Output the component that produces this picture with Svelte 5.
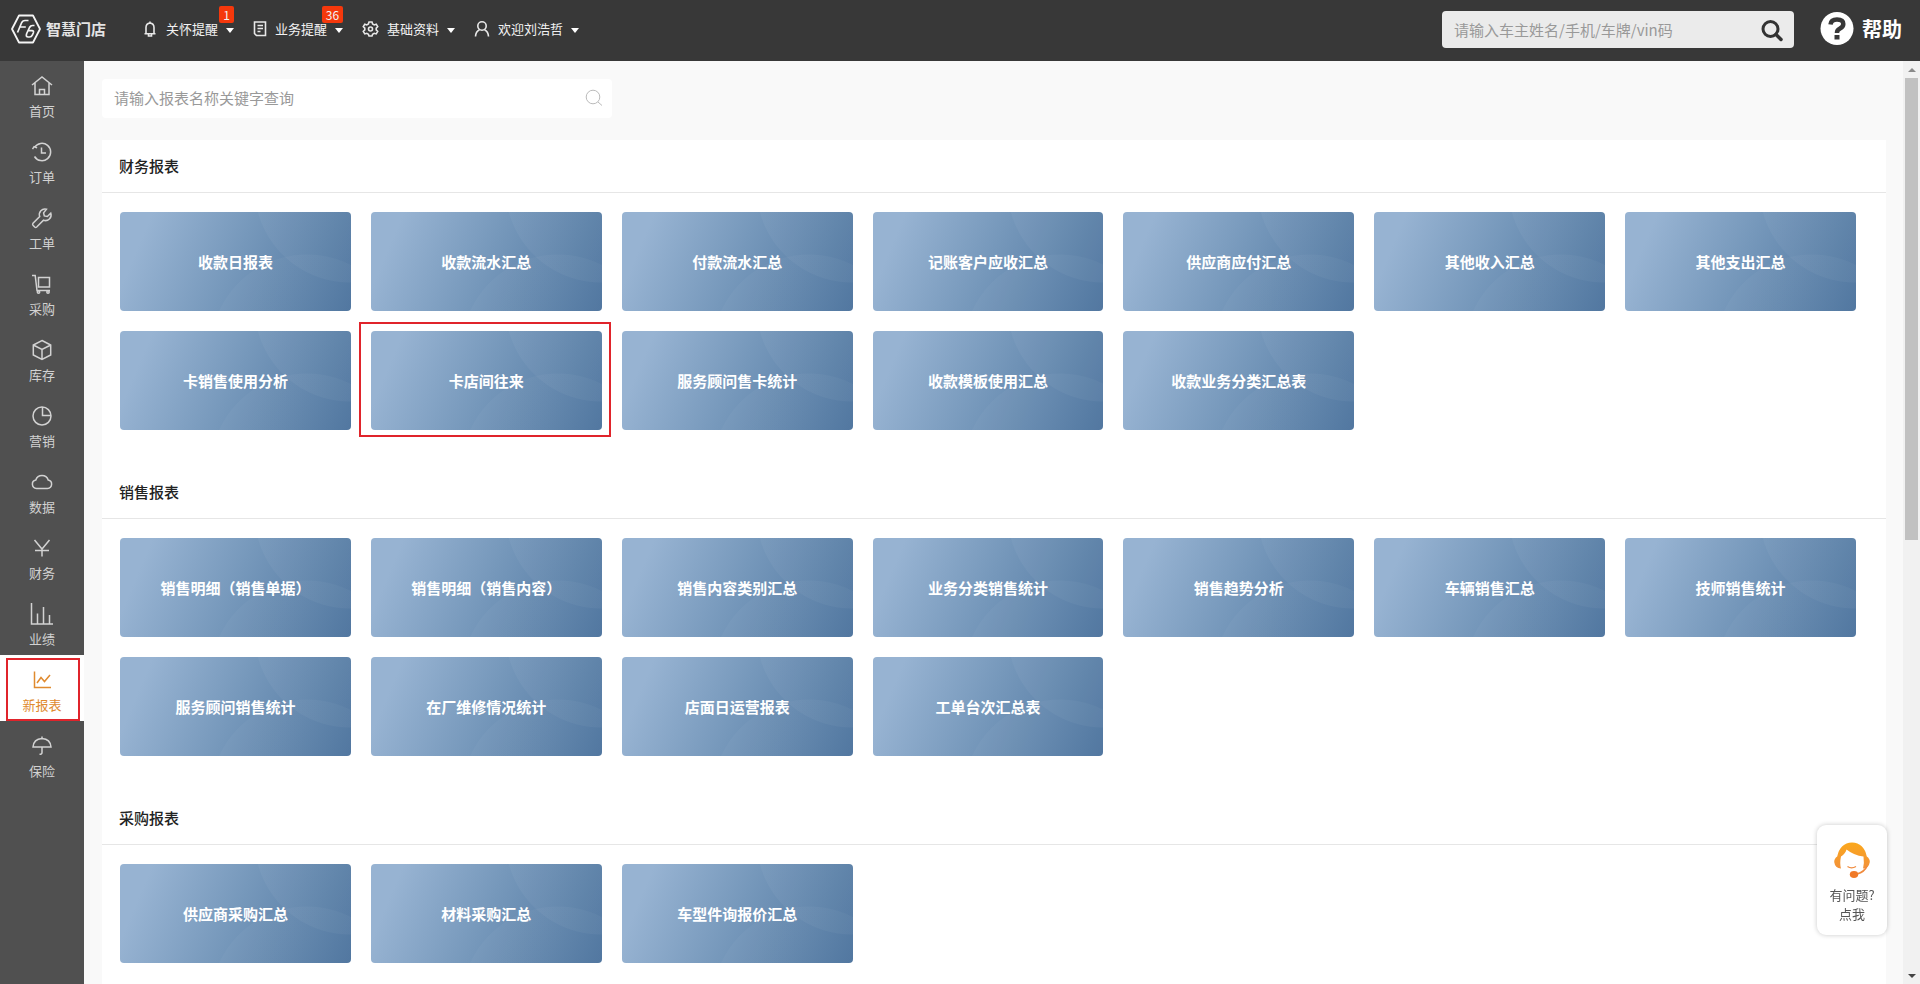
<script>
  const navItems = [
    { icon: 'bell', label: '关怀提醒', badge: '1' },
    { icon: 'doc', label: '业务提醒', badge: '36' },
    { icon: 'gear', label: '基础资料' },
    { icon: 'user', label: '欢迎刘浩哲' }
  ];

  const menu = [
    { icon: 'home', label: '首页' },
    { icon: 'history', label: '订单' },
    { icon: 'wrench', label: '工单' },
    { icon: 'cart', label: '采购' },
    { icon: 'box', label: '库存' },
    { icon: 'pie', label: '营销' },
    { icon: 'cloud', label: '数据' },
    { icon: 'yen', label: '财务' },
    { icon: 'bars', label: '业绩' },
    { icon: 'line', label: '新报表', active: true },
    { icon: 'umbrella', label: '保险' }
  ];

  const sections = [
    {
      title: '财务报表',
      cards: ['收款日报表', '收款流水汇总', '付款流水汇总', '记账客户应收汇总', '供应商应付汇总', '其他收入汇总', '其他支出汇总', '卡销售使用分析', '卡店间往来', '服务顾问售卡统计', '收款模板使用汇总', '收款业务分类汇总表']
    },
    {
      title: '销售报表',
      cards: ['销售明细（销售单据）', '销售明细（销售内容）', '销售内容类别汇总', '业务分类销售统计', '销售趋势分析', '车辆销售汇总', '技师销售统计', '服务顾问销售统计', '在厂维修情况统计', '店面日运营报表', '工单台次汇总表']
    },
    { title: '采购报表', cards: ['供应商采购汇总', '材料采购汇总', '车型件询报价汇总'] }
  ];
  const marked = '卡店间往来';
</script>

<div class="page">
  <header class="topbar">
    <a class="logo" href="#home">
      <svg width="32" height="30" viewBox="0 0 32 30" fill="none" stroke="#f4f4f4" aria-hidden="true">
        <path d="M9 1.500h14L30 15l-7 13.500H9L2 15z" stroke-width="1.800" stroke-linejoin="round" />
        <path d="M7.500 18.500l4-9.500q1-2.500 3.500-2.500h3.500M9.800 13h6" stroke-width="1.700" />
        <path d="M24.500 11.500h-2q-2 0-3 2l-2.800 6q-1.300 3.500 1.500 3.500h1.300q2 0 2.800-1.800l1-2.200q.8-2.300-1.300-2.300h-3.500" stroke-width="1.700" />
      </svg>
      <span>智慧门店</span>
    </a>

    <nav class="topnav">
      {#each navItems as item}
        <button class="nav-item">
          {#if item.icon === 'bell'}
            <svg width="16" height="18" viewBox="0 0 16 18"><path d="M4 13.500V7.500q0-4 4-4.500 4 .500 4 4.500v6M2.500 13.800h11M6.500 14v2h3v-2M8 3V1.500" /></svg>
          {:else if item.icon === 'doc'}
            <svg width="14" height="18" viewBox="0 0 14 18"><path d="M1.500 2h11v13.500h-9l-2-2zM4.500 5.500h5.500M4.500 8.500h5.500M4.500 11.500h3" /></svg>
          {:else if item.icon === 'gear'}
            <svg width="17" height="18" viewBox="0 0 17 18"><path d="M7 2h3l.6 2 1.600.9 2-.7 1.500 2.500-1.500 1.500v1.700l1.500 1.500-1.500 2.500-2-.6-1.600.9L10 16H7l-.6-1.800-1.600-.9-2 .6-1.500-2.500 1.500-1.500V8.200L1.300 6.700l1.500-2.500 2 .7 1.600-.9z" /><circle cx="8.500" cy="9" r="2" /></svg>
          {:else}
            <svg width="16" height="18" viewBox="0 0 16 18"><circle cx="8" cy="6" r="4.200" /><path d="M1.500 16.500q.3-5.200 4-6.800M14.500 16.500q-.3-5.200-4-6.800" /></svg>
          {/if}
          <span>{item.label}</span>
          <i class="caret"></i>
          {#if item.badge}<b class="badge">{item.badge}</b>{/if}
        </button>
      {/each}
    </nav>

    <form class="lookup">
      <input type="text" aria-label="车主查询" placeholder="请输入车主姓名/手机/车牌/vin码" />
      <button type="button" aria-label="查询">
        <svg width="24" height="24" viewBox="0 0 24 24" fill="none" stroke="#333"><circle cx="10.500" cy="11" r="7.500" stroke-width="3" /><path d="M16 16.500l5 5" stroke-width="3.500" stroke-linecap="round" /></svg>
      </button>
    </form>

    <a class="help" href="#help">
      <svg width="34" height="34" viewBox="0 0 34 34" aria-hidden="true">
        <circle cx="17" cy="16.500" r="16.500" fill="#fff" />
        <path d="M10.500 12.500q.5-5 6.500-5 6.300 0 6.300 4.500 0 2.800-3.300 4.500-3 1.500-3 4v.5" fill="none" stroke="#383838" stroke-width="4.500" />
        <rect x="14.500" y="23" width="5" height="4.500" fill="#383838" />
      </svg>
      <span>帮助</span>
    </a>
  </header>

  <div class="body">
    <nav class="sidebar">
      {#each menu as m}
        <a class="menu-item" class:active={m.active} href="#{m.icon}">
          <svg width="24" height="24" viewBox="0 0 24 24" aria-hidden="true">
            {#if m.icon === 'home'}
              <path d="M2 11l10-8 10 8M5 9v11.500h14V9M9.500 20.500v-5h5v5" />
            {:else if m.icon === 'history'}
              <path d="M4.500 7.500A8.700 8.700 0 1 1 4.500 16.500M11.500 7.500v5.500h4.500M2.500 9.200l1.600-2.500 3 1.200" />
            {:else if m.icon === 'wrench'}
              <path d="M16.500 3.200a5.600 5.600 0 0 0-6.800 7.300L3 17.300q-.8 1 0 2l1.700 1.700q1 .8 2 0l6.800-6.800a5.600 5.600 0 0 0 7.300-7l-3.500 3.300-3-.6-.7-3z" />
            {:else if m.icon === 'cart'}
              <path d="M2 3.500h3.200L7 18.500h13M8.500 5.500h11v9.500h-11z" /><circle cx="8.500" cy="20" r="1.200" /><circle cx="18" cy="20" r="1.200" />
            {:else if m.icon === 'box'}
              <path d="M12 2.500l8.700 4.500v10L12 21.500 3.300 17V7zM3.300 7l8.700 4.500L20.700 7M12 11.500v10" />
            {:else if m.icon === 'pie'}
              <circle cx="12" cy="12" r="9" /><path d="M12.500 3v8.500H21" />
            {:else if m.icon === 'cloud'}
              <path d="M6.500 18.500a4.300 4.300 0 0 1-.7-8.500 6.500 6.500 0 0 1 12.400 0 4.300 4.300 0 0 1-.7 8.500z" />
            {:else if m.icon === 'yen'}
              <path d="M4.500 4l7.500 9 7.500-9M12 13v7.500M5 14.500h14" />
            {:else if m.icon === 'bars'}
              <path d="M1.500 1v21H23M7.500 22V11.500M13.500 22V5M19.500 22v-9" />
            {:else if m.icon === 'line'}
              <path d="M4.500 3.500v16H21M7 15l4-5.500 3.500 4L20 7" />
            {:else}
              <path d="M3 13q.6-8 9-8.500 8.400.5 9 8.500zM12 2.500v2M12 13v5.500q0 2-2.500 1.800" />
            {/if}
          </svg>
          <span>{m.label}</span>
        </a>
      {/each}
    </nav>

    <main class="content">
      <form class="search">
        <input type="text" aria-label="报表名称" placeholder="请输入报表名称关键字查询" />
        <svg width="18" height="18" viewBox="0 0 18 18" fill="none" stroke="#bbb" aria-hidden="true"><circle cx="8" cy="8" r="6.800" /><path d="M13 13l4 3.500" /></svg>
      </form>

      <div class="panel">
        {#each sections as s}
          <section>
            <h2>{s.title}</h2>
            <div class="grid">
              {#each s.cards as c}
                <button class="card" class:marked={c === marked}>{c}</button>
              {/each}
            </div>
          </section>
        {/each}
      </div>
    </main>

    <div class="scrollbar" aria-hidden="true">
      <i class="arrow up"></i>
      <div class="track"><div class="thumb"></div></div>
      <i class="arrow down"></i>
    </div>
  </div>

  <button class="support">
    <svg width="38" height="38" viewBox="0 0 38 38" aria-hidden="true">
      <defs>
        <linearGradient id="hair" x1="0" y1="0" x2="0" y2="1"><stop offset="0" stop-color="#fba81c" /><stop offset="1" stop-color="#f2913a" /></linearGradient>
      </defs>
      <path d="M8 27.500Q2 27 1.200 21q0-3.500 3-5.500Q7 2 19 1.500 31 2 33.800 15.500q3 2 3 5.500-.8 6-6.800 6.500 1.500-5 .5-12Q21 14.500 13.500 8.500 12.500 12.500 8 15.500q-1.500 7 0 12z" fill="url(#hair)" />
      <path d="M14.500 25.500q4 2.600 8.500 0" fill="none" stroke="#f08a3c" stroke-width="1.300" />
      <path d="M34 25q-2.500 6-10 8" fill="none" stroke="#f08a3c" stroke-width="1.800" />
      <ellipse cx="21" cy="33.500" rx="4.200" ry="3.400" fill="#f07a28" />
    </svg>
    <span>有问题?</span>
    <span>点我</span>
  </button>
</div>

<style>
  :global(body) {
    margin: 0;
    overflow: hidden;
  }
  .page {
    display: flex;
    flex-direction: column;
    height: 100vh;
    font-family: "Noto Sans CJK SC", "Noto Sans", sans-serif;
    background: #f9f9f9;
  }
  button, input {
    font-family: inherit;
    border: 0;
    padding: 0;
    background: none;
  }
  button {
    cursor: pointer;
  }
  a {
    text-decoration: none;
  }
  .topbar {
    display: flex;
    align-items: center;
    flex: none;
    box-sizing: border-box;
    height: 61px;
    padding: 0 18px 4px 10px;
    background: #383838;
    color: #fff;
  }
  .logo {
    display: flex;
    align-items: center;
    gap: 4px;
    color: #e4e4e4;
    font-size: 15px;
    font-weight: 700;
  }
  .topnav {
    display: flex;
    gap: 19px;
    margin-left: 36px;
  }
  .nav-item {
    position: relative;
    display: flex;
    align-items: center;
    gap: 8px;
    color: #f2f2f2;
    font-size: 13px;
    line-height: 20px;
  }
  .nav-item svg {
    fill: none;
    stroke: #e8e8e8;
    stroke-width: 1.6;
  }
  .caret {
    border: 4px solid transparent;
    border-top: 5px solid #fff;
    border-bottom: 0;
    margin-top: 4px;
  }
  .badge {
    position: absolute;
    right: 0;
    top: -13px;
    box-sizing: border-box;
    min-width: 14px;
    padding: 0 4px;
    border-radius: 2px;
    background: #f5380c;
    font-size: 12px;
    font-weight: 400;
    line-height: 17px;
  }
  .lookup {
    display: flex;
    align-items: center;
    box-sizing: border-box;
    width: 352px;
    height: 37px;
    margin: 2px 0 0 auto;
    padding: 0 10px 0 12px;
    border-radius: 4px;
    background: #ebebeb;
  }
  .lookup input {
    flex: 1;
    min-width: 0;
    font-size: 15px;
    outline: 0;
  }
  .lookup button {
    display: flex;
  }
  ::placeholder {
    color: #999;
    opacity: 1;
  }
  .help {
    display: flex;
    align-items: center;
    gap: 8px;
    height: 34px;
    margin-left: 26px;
    color: #fff;
    font-size: 20px;
    font-weight: 700;
    line-height: 32px;
  }
  .body {
    display: flex;
    flex: 1;
    min-height: 0;
  }
  .sidebar {
    flex: none;
    width: 84px;
    background: #505050;
  }
  .menu-item {
    position: relative;
    display: flex;
    flex-direction: column;
    align-items: center;
    gap: 3px;
    box-sizing: border-box;
    height: 66px;
    padding-top: 13px;
    color: #d2d2d2;
    font-size: 13px;
    line-height: 20px;
  }
  .menu-item svg {
    flex: none;
    fill: none;
    stroke: currentColor;
    stroke-width: 1.5;
  }
  .menu-item.active {
    background: #fff;
    color: #e08a2e;
  }
  .menu-item.active::after {
    content: "";
    position: absolute;
    inset: 3px 4px 0 6px;
    border: 2px solid #e0242b;
  }
  .content {
    flex: 1;
    min-width: 0;
    overflow: hidden;
    padding: 18px 17px 0 18px;
  }
  .search {
    display: flex;
    align-items: center;
    box-sizing: border-box;
    width: 510px;
    height: 39px;
    padding: 0 9px 2px 12px;
    border-radius: 4px;
    background: #fff;
  }
  .search input {
    flex: 1;
    min-width: 0;
    font-size: 15px;
    outline: 0;
  }
  .panel {
    margin-top: 22px;
    background: #fff;
  }
  section {
    padding-bottom: 36px;
  }
  h2 {
    margin: 0;
    padding-left: 17px;
    border-bottom: 1px solid #e6e6e6;
    color: #222;
    font-size: 15px;
    font-weight: 500;
    line-height: 52px;
  }
  .grid {
    display: grid;
    grid-template-columns: repeat(7, 1fr);
    gap: 20px;
    padding: 19px 30px 0 18px;
  }
  .card {
    position: relative;
    height: 99px;
    border-radius: 4px;
    background:
      radial-gradient(circle at 230px -25px, rgba(255, 255, 255, 0.04) 95px, transparent 96px),
      radial-gradient(circle at 187px 139px, rgba(255, 255, 255, 0.03) 96px, transparent 97px),
      linear-gradient(113deg, #97b3d2 12%, #7698bb 50%, #4c739d 100%);
    color: #fff;
    font-size: 15px;
    font-weight: 700;
  }
  .card.marked::after {
    content: "";
    position: absolute;
    inset: -9px -9px -7px -12px;
    border: 2px solid #e0242b;
  }
  .scrollbar {
    display: flex;
    flex-direction: column;
    align-items: center;
    flex: none;
    width: 17px;
    background: #f1f1f1;
  }
  .track {
    flex: 1;
    width: 13px;
  }
  .thumb {
    height: 52%;
    background: #c1c1c1;
  }
  .arrow {
    border: 4px solid transparent;
    margin: 7px 0 6px;
  }
  .up {
    border-top: 0;
    border-bottom-color: #8a8a8a;
  }
  .down {
    border-bottom: 0;
    border-top-color: #444;
  }
  .support {
    position: fixed;
    right: 33px;
    bottom: 49px;
    display: flex;
    flex-direction: column;
    align-items: center;
    width: 70px;
    padding: 16px 0 12px;
    border-radius: 9px;
    background: #fff;
    box-shadow: 0 0 5px rgba(0, 0, 0, 0.22);
    color: #555;
    font-size: 13px;
    line-height: 19px;
  }
  .support svg {
    margin-bottom: 6px;
  }
</style>
